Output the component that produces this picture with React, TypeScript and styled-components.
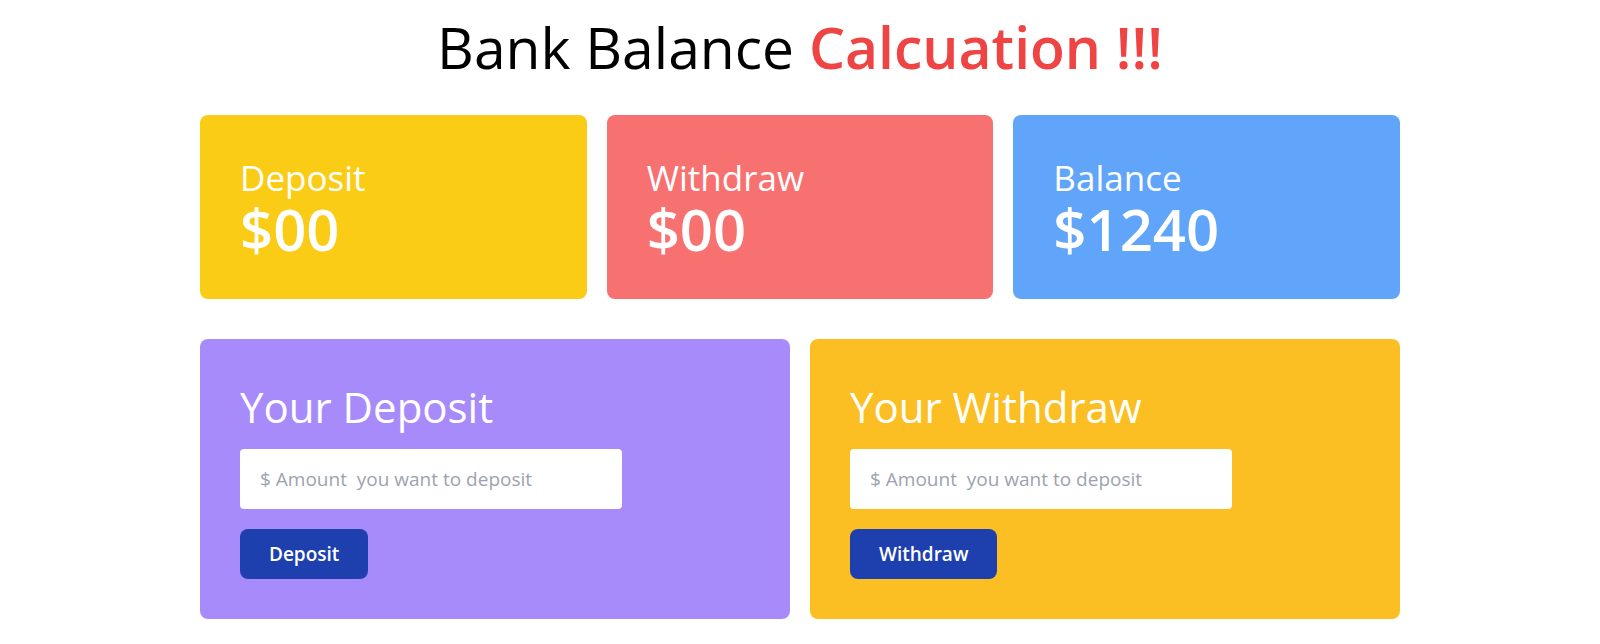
import React from "react";
import styled, { createGlobalStyle } from "styled-components";

const GlobalStyle = createGlobalStyle`
  * { box-sizing: border-box; }
  body {
    margin: 0;
    background: #ffffff;
    font-family: "Segoe UI", "Open Sans", "Noto Sans", sans-serif;
  }
`;

const Page = styled.main`
  width: 1200px;
  margin: 0 auto;
  padding-top: 19px;
  padding-bottom: 25px;
`;

const Title = styled.h1`
  margin: 0 0 39px;
  text-align: center;
  font-size: 57px;
  line-height: 57px;
  font-weight: 400;
  color: #000000;
`;

const Accent = styled.span`
  color: #ef4444;
  font-weight: 600;
`;

const StatGrid = styled.section`
  display: grid;
  grid-template-columns: repeat(3, 1fr);
  gap: 20px;
`;

const StatCard = styled.div<{ $bg: string }>`
  background: ${(p) => p.$bg};
  border-radius: 8px;
  padding: 43px 40px 41px;
  color: #ffffff;
  display: flex;
  flex-direction: column;
  gap: 2px;
`;

const StatLabel = styled.div`
  font-size: 35px;
  line-height: 40px;
  font-weight: 400;
`;

const StatValue = styled.div`
  font-size: 58px;
  line-height: 58px;
  font-weight: 600;
`;

const FormGrid = styled.section`
  display: grid;
  grid-template-columns: repeat(2, 1fr);
  gap: 20px;
  margin-top: 40px;
`;

const FormCard = styled.div<{ $bg: string }>`
  background: ${(p) => p.$bg};
  border-radius: 8px;
  padding: 47px 40px 40px;
  display: flex;
  flex-direction: column;
  align-items: flex-start;
`;

const FormTitle = styled.h2`
  margin: 0;
  font-size: 42px;
  line-height: 42px;
  font-weight: 400;
  color: #ffffff;
`;

const AmountInput = styled.input`
  margin-top: 21px;
  width: 382px;
  height: 60px;
  border: none;
  border-radius: 4px;
  background: #ffffff;
  padding: 0 20px;
  font-family: inherit;
  font-size: 19px;
  color: #111827;
  outline: none;
  &::placeholder {
    color: #9ca3af;
  }
`;

const ActionButton = styled.button`
  margin-top: 20px;
  height: 50px;
  padding: 0 29px;
  border: none;
  border-radius: 8px;
  background: #1e40af;
  color: #ffffff;
  font-family: inherit;
  font-size: 19px;
  font-weight: 600;
  cursor: pointer;
`;

export default function App() {
  return (
    <>
      <GlobalStyle />
      <Page>
        <Title>
          Bank Balance <Accent>Calcuation !!!</Accent>
        </Title>
        <StatGrid>
          <StatCard $bg="#facc15">
            <StatLabel>Deposit</StatLabel>
            <StatValue>$00</StatValue>
          </StatCard>
          <StatCard $bg="#f87171">
            <StatLabel>Withdraw</StatLabel>
            <StatValue>$00</StatValue>
          </StatCard>
          <StatCard $bg="#60a5fa">
            <StatLabel>Balance</StatLabel>
            <StatValue>$1240</StatValue>
          </StatCard>
        </StatGrid>
        <FormGrid>
          <FormCard $bg="#a78bfa">
            <FormTitle>Your Deposit</FormTitle>
            <AmountInput type="number" placeholder="$ Amount  you want to deposit" />
            <ActionButton>Deposit</ActionButton>
          </FormCard>
          <FormCard $bg="#fbbf24">
            <FormTitle>Your Withdraw</FormTitle>
            <AmountInput type="number" placeholder="$ Amount  you want to deposit" />
            <ActionButton>Withdraw</ActionButton>
          </FormCard>
        </FormGrid>
      </Page>
    </>
  );
}
